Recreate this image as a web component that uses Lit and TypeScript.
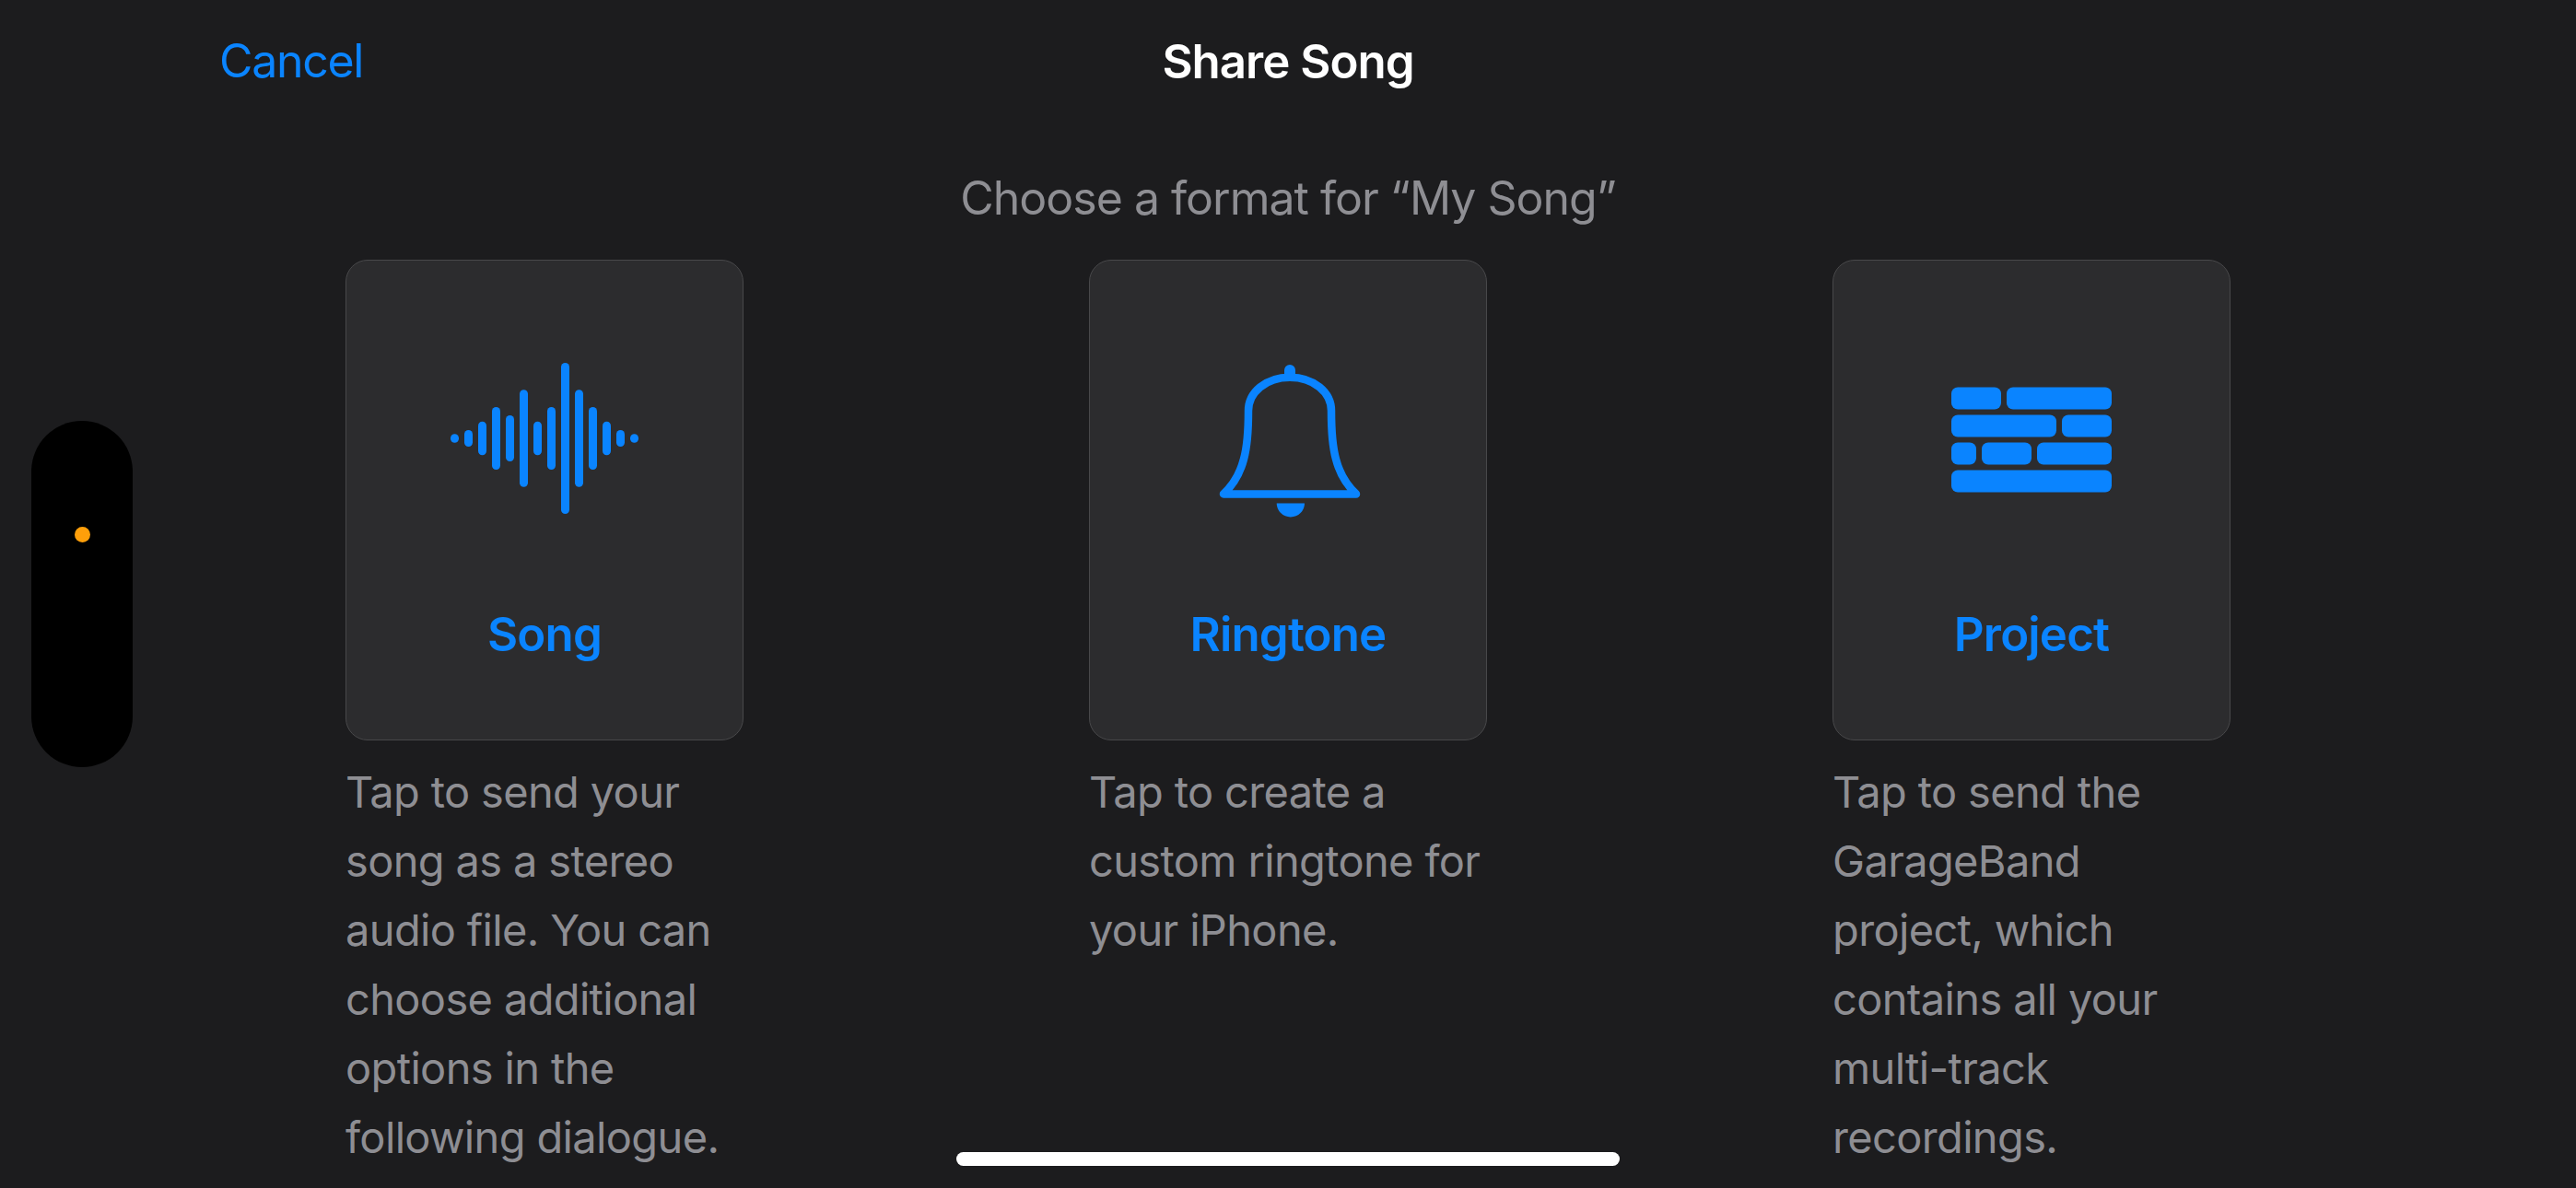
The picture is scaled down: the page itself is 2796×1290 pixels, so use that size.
import { LitElement, html, css, svg } from "lit";
import { customElement } from "lit/decorators.js";

const BARS = [9.5, 18, 36.5, 68, 50, 105.6, 36.5, 68, 164, 105.6, 68, 36.5, 18, 9.5];
const BRICKS: number[][][] = [
  [[0, 54], [60, 174]],
  [[0, 114], [120, 174]],
  [[0, 27], [33, 87], [93, 174]],
  [[0, 174]],
];

const wave = html`<svg class="icon" viewBox="-10 0 220 200" width="220" height="200">
  ${BARS.map((h, i) => svg`<rect x=${-2 + i * 15} y=${100 - h / 2} width="9" height=${h} rx="4.5" fill="#0a84ff"></rect>`)}
</svg>`;

const bell = html`<svg class="icon" viewBox="-10 0 220 200" width="220" height="200">
  <path d="M102 33.700C76 33.700 57 50 57 70C57 92 56 108 52 122.500C48 138 40 151 30 160.400H174C164 151 156 138 152 122.500C148 108 147 92 147 70C147 50 128 33.700 102 33.700Z" fill="none" stroke="#0a84ff" stroke-width="8.500" stroke-linejoin="round"></path>
  <path d="M96 32V26a6 6 0 0 1 12 0V32Z" fill="#0a84ff"></path>
  <path d="M87.700 170.500H118A15.150 15 0 0 1 87.700 170.500Z" fill="#0a84ff"></path>
</svg>`;

const wall = html`<svg class="icon" viewBox="-10 0 220 200" width="220" height="200">
  ${BRICKS.map((row, r) => row.map(([a, b]) => svg`<rect x=${13 + a} y=${44.5 + r * 30} width=${b - a} height="24" rx="7" fill="#0a84ff"></rect>`))}
</svg>`;

const OPTIONS = [
  { label: "Song", icon: wave, lines: ["Tap to send your", "song as a stereo", "audio file. You can", "choose additional", "options in the", "following dialogue."] },
  { label: "Ringtone", icon: bell, lines: ["Tap to create a", "custom ringtone for", "your iPhone."] },
  { label: "Project", icon: wall, lines: ["Tap to send the", "GarageBand", "project, which", "contains all your", "multi-track", "recordings."] },
];

@customElement("app-root")
export class AppRoot extends LitElement {
  static styles = css`
    :host {
      display: block;
      position: relative;
      width: 2796px;
      height: 1290px;
      overflow: hidden;
      background: #1c1c1e;
      font-family: Inter, "Liberation Sans", sans-serif;
    }
    .header {
      display: grid;
      grid-template-columns: 1fr auto 1fr;
      align-items: center;
      height: 132px;
      padding-left: 238px;
      padding-right: 238px;
    }
    .cancel {
      font-size: 50px;
      letter-spacing: -1.3px;
      color: #0a84ff;
    }
    .title {
      font-size: 51px;
      font-weight: 600;
      letter-spacing: -1px;
      color: #fff;
    }
    .subtitle {
      margin: 0;
      height: 150px;
      padding-top: 54px;
      box-sizing: border-box;
      text-align: center;
      font-size: 50px;
      line-height: 58px;
      letter-spacing: -1px;
      color: #8e8e93;
    }
    .options {
      display: grid;
      grid-template-columns: repeat(3, 432px);
      column-gap: 375px;
      justify-content: center;
    }
    .card {
      box-sizing: border-box;
      height: 522px;
      display: flex;
      flex-direction: column;
      align-items: center;
      background: #2c2c2e;
      border: 1.5px solid #48484a;
      border-radius: 24px;
    }
    .icon-box {
      height: 386px;
      display: flex;
      align-items: center;
      justify-content: center;
    }
    .icon { display: block; }
    .label {
      margin-top: -9px;
      font-size: 51px;
      line-height: 58px;
      font-weight: 600;
      letter-spacing: -0.85px;
      color: #0a84ff;
    }
    .desc {
      margin: 18px 0 0;
      font-size: 47px;
      line-height: 75px;
      letter-spacing: -0.65px;
      white-space: nowrap;
      color: #8e8e93;
    }
    .desc span { display: block; }
    .pill {
      position: absolute;
      left: 34px;
      top: 457px;
      width: 110px;
      height: 376px;
      border-radius: 55px;
      background: #000;
    }
    .dot {
      position: absolute;
      left: 47px;
      top: 115px;
      width: 17px;
      height: 17px;
      border-radius: 50%;
      background: #ff9f0a;
    }
    .home {
      position: absolute;
      left: 1038px;
      top: 1251px;
      width: 720px;
      height: 15px;
      border-radius: 8px;
      background: #fff;
    }
  `;

  render() {
    return html`
      <div class="header">
        <span class="cancel">Cancel</span>
        <span class="title">Share Song</span>
        <span></span>
      </div>
      <p class="subtitle">Choose a format for “My Song”</p>
      <div class="options">
        ${OPTIONS.map(
          (o) => html`<div class="option">
            <div class="card">
              <div class="icon-box">${o.icon}</div>
              <div class="label">${o.label}</div>
            </div>
            <p class="desc">${o.lines.map((l) => html`<span>${l}</span>`)}</p>
          </div>`
        )}
      </div>
      <div class="pill"><div class="dot"></div></div>
      <div class="home"></div>
    `;
  }
}
